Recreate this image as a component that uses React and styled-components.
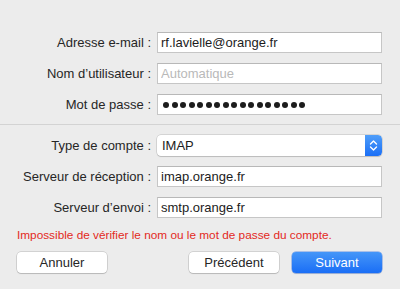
import styled, { createGlobalStyle } from "styled-components";

const GlobalStyle = createGlobalStyle`
  html, body {
    margin: 0;
    padding: 0;
    background: #ececec;
  }
  body {
    font-family: "Liberation Sans", Arial, sans-serif;
    color: #262626;
  }
`;

const Sheet = styled.div`
  width: 400px;
  height: 289px;
  box-sizing: border-box;
  padding-top: 32px;
  background: #ececec;
  overflow: hidden;
`;

const Group = styled.div`
  display: grid;
  grid-template-columns: 1fr 225px;
  column-gap: 6px;
  row-gap: 10px;
  padding: 0 18px 0 17px;
  align-items: center;
`;

const Label = styled.label`
  font-size: 13px;
  text-align: right;
  white-space: nowrap;
  color: #262626;
`;

const Input = styled.input`
  box-sizing: border-box;
  height: 21px;
  width: 100%;
  margin: 0;
  padding: 0 0 0 3px;
  border: 1px solid #c6c6c6;
  border-top-color: #b8b8b8;
  background: #fff;
  font-family: inherit;
  font-size: 13px;
  color: #1c1c1c;
  outline: none;

  &::placeholder {
    color: #b9b9b9;
  }
`;

const PasswordBox = styled.div`
  box-sizing: border-box;
  height: 21px;
  display: flex;
  align-items: center;
  gap: 2.5px;
  padding-left: 5px;
  border: 1px solid #c6c6c6;
  border-top-color: #b8b8b8;
  background: #fff;
`;

const Dot = styled.span`
  width: 6px;
  height: 6px;
  border-radius: 50%;
  background: #1c1c1c;
`;

const Separator = styled.hr`
  margin: 9px 0 10px;
  border: 0;
  border-top: 1px solid #d3d3d3;
`;

const Select = styled.div`
  box-sizing: border-box;
  height: 21px;
  display: flex;
  align-items: center;
  justify-content: space-between;
  padding-left: 5px;
  border-radius: 4px;
  background: #fff;
  box-shadow: 0 0 0 0.5px rgba(0, 0, 0, 0.2), 0 1px 1px rgba(0, 0, 0, 0.12);
  font-size: 13px;
  color: #1c1c1c;
  overflow: hidden;
`;

const Stepper = styled.span`
  width: 17px;
  height: 21px;
  display: flex;
  align-items: center;
  justify-content: center;
  background: linear-gradient(#4f9ef9, #1b6ff6);
  border-radius: 0 4px 4px 0;
`;

const ErrorText = styled.p`
  margin: 10px 0 10px 17px;
  font-size: 11.8px;
  line-height: 14px;
  color: #e3291c;
`;

const Footer = styled.div`
  display: flex;
  align-items: center;
  padding: 0 18px 0 17px;
  gap: 13px;
`;

const Button = styled.button`
  box-sizing: border-box;
  width: 90px;
  height: 21px;
  margin: 0;
  padding: 0;
  border: none;
  border-radius: 4px;
  font-family: inherit;
  font-size: 13px;
  color: ${(p) => (p.$primary ? "#fff" : "#262626")};
  background: ${(p) =>
    p.$primary ? "linear-gradient(#4596f8, #1a6ef6)" : "#fff"};
  box-shadow: ${(p) =>
    p.$primary
      ? "0 0 0 0.5px rgba(20, 90, 220, 0.6), 0 1px 1px rgba(0, 0, 0, 0.12)"
      : "0 0 0 0.5px rgba(0, 0, 0, 0.22), 0 1px 1px rgba(0, 0, 0, 0.12)"};
`;

const Spacer = styled.div`
  flex: 1;
`;

function Chevrons() {
  return (
    <svg width="9" height="13" viewBox="0 0 9 13">
      <path d="M1.5 5 L4.5 2 L7.5 5" fill="none" stroke="#fff" strokeWidth="1.4" strokeLinecap="round" strokeLinejoin="round" />
      <path d="M1.5 8 L4.5 11 L7.5 8" fill="none" stroke="#fff" strokeWidth="1.4" strokeLinecap="round" strokeLinejoin="round" />
    </svg>
  );
}

export default function App() {
  return (
    <Sheet>
      <GlobalStyle />
      <Group>
        <Label>Adresse e-mail :</Label>
        <Input readOnly defaultValue="rf.lavielle@orange.fr" />
        <Label>Nom d’utilisateur :</Label>
        <Input readOnly placeholder="Automatique" />
        <Label>Mot de passe :</Label>
        <PasswordBox>
          {Array.from({ length: 17 }, (_, i) => (
            <Dot key={i} />
          ))}
        </PasswordBox>
      </Group>
      <Separator />
      <Group>
        <Label>Type de compte :</Label>
        <Select>
          IMAP
          <Stepper>
            <Chevrons />
          </Stepper>
        </Select>
        <Label>Serveur de réception :</Label>
        <Input readOnly defaultValue="imap.orange.fr" />
        <Label>Serveur d’envoi :</Label>
        <Input readOnly defaultValue="smtp.orange.fr" />
      </Group>
      <ErrorText>Impossible de vérifier le nom ou le mot de passe du compte.</ErrorText>
      <Footer>
        <Button>Annuler</Button>
        <Spacer />
        <Button>Précédent</Button>
        <Button $primary>Suivant</Button>
      </Footer>
    </Sheet>
  );
}
